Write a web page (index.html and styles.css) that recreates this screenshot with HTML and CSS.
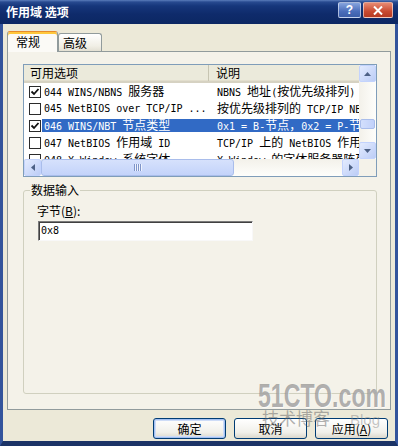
FILE: index.html
```html
<!DOCTYPE html>
<html lang="zh-CN">
<head>
    <meta charset="UTF-8">
    <title>作用域 选项</title>
    <link rel="stylesheet" href="styles.css">
</head>
<body>
<div class="window">
    <div class="titlebar">
        <span class="title">作用域 选项</span>
        <div class="caption-buttons">
            <span class="cap-btn help">?</span>
            <span class="cap-btn close">
                <svg width="10" height="9" viewBox="0 0 10 9"><path d="M1 0.5 L9 8.5 M9 0.5 L1 8.5" stroke="#fff" stroke-width="2"/></svg>
            </span>
        </div>
    </div>

    <div class="client">
        <div class="tabs">
            <div class="tab active">常规</div>
            <div class="tab">高级</div>
        </div>

        <div class="panel">
            <div class="listview">
                <div class="lv-top">
                    <div class="lv-body">
                        <div class="lv-header">
                            <div class="hcol h1">可用选项</div>
                            <div class="hcol h2">说明</div>
                        </div>
                        <div class="lv-row">
                            <span class="check on"></span>
                            <div class="item">
                                <span class="c1">044 WINS/NBNS <span class="h">服务器</span></span>
                                <span class="c2">NBNS <span class="h">地址</span>(<span class="h">按优先级排列</span>)</span>
                            </div>
                        </div>
                        <div class="lv-row">
                            <span class="check"></span>
                            <div class="item">
                                <span class="c1">045 NetBIOS over TCP/IP ...</span>
                                <span class="c2"><span class="h">按优先级排列的</span> TCP/IP NBNS <span class="h">服务器</span></span>
                            </div>
                        </div>
                        <div class="lv-row">
                            <span class="check on"></span>
                            <div class="item selected">
                                <span class="c1">046 WINS/NBT <span class="h">节点类型</span></span>
                                <span class="c2">0x1 = B-<span class="h">节点，</span>0x2 = P-<span class="h">节点</span></span>
                            </div>
                        </div>
                        <div class="lv-row">
                            <span class="check"></span>
                            <div class="item">
                                <span class="c1">047 NetBIOS <span class="h">作用域</span> ID</span>
                                <span class="c2">TCP/IP <span class="h">上的</span> NetBIOS <span class="h">作用域</span></span>
                            </div>
                        </div>
                        <div class="lv-row">
                            <span class="check"></span>
                            <div class="item">
                                <span class="c1">048 X Window <span class="h">系统字体</span></span>
                                <span class="c2">X Window <span class="h">的字体服务器阵列</span></span>
                            </div>
                        </div>
                    </div>
                    <div class="vscroll">
                        <span class="sb-btn">
                            <svg width="7" height="4" viewBox="0 0 7 4"><path d="M0 4 L3.5 0 L7 4Z" fill="#4D6185"/></svg>
                        </span>
                        <span class="v-gap-top"></span>
                        <span class="v-thumb"></span>
                        <span class="v-gap-bottom"></span>
                        <span class="sb-btn">
                            <svg width="7" height="4" viewBox="0 0 7 4"><path d="M0 0 L3.5 4 L7 0Z" fill="#4D6185"/></svg>
                        </span>
                    </div>
                </div>
                <div class="lv-bottom">
                    <div class="hscroll">
                        <span class="sb-btn">
                            <svg width="4" height="7" viewBox="0 0 4 7"><path d="M4 0 L0 3.5 L4 7Z" fill="#4D6185"/></svg>
                        </span>
                        <span class="h-thumb"><span class="grip"></span></span>
                        <span class="h-track"></span>
                        <span class="sb-btn">
                            <svg width="4" height="7" viewBox="0 0 4 7"><path d="M0 0 L4 3.5 L0 7Z" fill="#4D6185"/></svg>
                        </span>
                    </div>
                    <div class="corner"></div>
                </div>
            </div>

            <fieldset class="group">
                <legend>数据输入</legend>
                <label class="field-label">字节(<u>B</u>):</label>
                <div class="input">0x8</div>
            </fieldset>
        </div>

        <div class="buttons">
            <button class="btn default">确定</button>
            <button class="btn">取消</button>
            <button class="btn">应用(<u>A</u>)</button>
        </div>
    </div>

    <div class="watermark">
        <div class="wm-big">51CTO.com</div>
        <div class="wm-small"><span class="wm-cn">技术博客</span><span class="wm-blog">Blog</span></div>
    </div>
</div>
</body>
</html>
```

FILE: styles.css
```css
* {
    box-sizing: border-box;
}
body {
    margin: 0;
    background: #ECE9D8;
    font-family: "Noto Sans CJK SC", sans-serif;
    font-size: 12px;
    color: #000;
}
.window {
    position: relative;
    width: 398px;
    height: 446px;
    display: flex;
    flex-direction: column;
    background: #ECE9D8;
    overflow: hidden;
}

/* title bar */
.titlebar {
    height: 24px;
    flex: none;
    display: flex;
    align-items: center;
    justify-content: space-between;
    padding: 0 5px 0 6px;
    background: linear-gradient(#5b7dbb 0, #284a90 2px, #16367b 6px, #0f2b6b 14px, #0c2763 24px);
}
.title {
    color: #fff;
    font-weight: bold;
    font-size: 12px;
    line-height: 14px;
}
.caption-buttons {
    display: flex;
    gap: 2px;
    margin-top: -4px;
}
.cap-btn {
    height: 16px;
    display: flex;
    align-items: center;
    justify-content: center;
    border: 1px solid rgba(255, 255, 255, 0.55);
    border-radius: 2px;
    color: #fff;
    font-family: "Liberation Sans", sans-serif;
    font-weight: bold;
    font-size: 12px;
}
.cap-btn.help {
    width: 23px;
    background: linear-gradient(#86a4dd, #4a6dbb 60%, #3c5ea9);
}
.cap-btn.close {
    width: 30px;
    background: linear-gradient(#e88a72, #c94a31 60%, #b53a22);
}

/* client area */
.client {
    flex: 1;
    display: flex;
    flex-direction: column;
    border-style: solid;
    border-width: 0 3px 5px;
    border-color: #33549c #33549c #1b3366;
    padding: 7px 4px 0 4px;
}

/* tabs */
.tabs {
    height: 20px;
    flex: none;
    display: flex;
    align-items: flex-end;
    position: relative;
    z-index: 1;
}
.tab {
    width: 44px;
    height: 18px;
    padding: 1px 0 0 4px;
    line-height: 16px;
    border: 1px solid #919B9C;
    border-bottom: none;
    border-radius: 3px 3px 0 0;
    background: linear-gradient(#fff, #F1EFE6 70%, #E3E0D3);
}
.tab.active {
    width: 51px;
    height: 21px;
    margin-bottom: -1px;
    padding: 3px 0 0 8px;
    line-height: 14px;
    border-top: 1px solid #E68B2C;
    box-shadow: inset 0 2px #FFC83C;
    background: #FBFAF6;
}

/* tab page */
.panel {
    height: 359px;
    flex: none;
    border: 1px solid #919B9C;
    background: #F4F2E9;
    padding: 12px 0 0 15px;
    display: flex;
    flex-direction: column;
}

/* list view */
.listview {
    width: 354px;
    height: 113px;
    flex: none;
    border: 1px solid #7F9DB9;
    background: #fff;
    display: flex;
    flex-direction: column;
}
.lv-top {
    height: 94px;
    display: flex;
}
.lv-body {
    flex: 1;
    overflow: hidden;
}
.lv-header {
    height: 18px;
    display: flex;
    background: #EBEADB;
    border-bottom: 2px solid #D6D2C2;
    box-shadow: inset 0 -1px #E2DECD;
}
.hcol {
    line-height: 15px;
    white-space: nowrap;
}
.h1 {
    width: 185px;
    padding-left: 6px;
    border-right: 1px solid #C7C5B2;
}
.h2 {
    flex: 1;
    padding-left: 7px;
}
.lv-row {
    height: 17px;
    display: flex;
    align-items: center;
    white-space: nowrap;
}
.check {
    width: 12px;
    height: 12px;
    flex: none;
    margin: 0 1px 0 5px;
    border: 1px solid #2b2b2b;
    background: #fff;
}
.check.on {
    background: #fff url("data:image/svg+xml,%3Csvg xmlns='http://www.w3.org/2000/svg' width='10' height='10' viewBox='0 0 10 10'%3E%3Cpath d='M1.5 4.5 L4 7 L8.5 2' fill='none' stroke='%23111' stroke-width='1.8'/%3E%3C/svg%3E") no-repeat center;
}
.item {
    flex: 1;
    height: 13px;
    display: flex;
    align-items: center;
    font-family: "DejaVu Sans Mono", "Liberation Mono", monospace;
    font-size: 10px;
    line-height: 13px;
}
.item.selected {
    background: #316AC5;
    color: #fff;
}
.item .c1 {
    width: 167px;
    flex: none;
    padding-left: 2px;
    overflow: hidden;
}
.item .c2 {
    flex: 1;
    padding-left: 8px;
    overflow: hidden;
}
.h {
    font-family: "Noto Sans CJK SC", sans-serif;
    font-size: 12px;
    line-height: 13px;
}

/* scroll bars */
.vscroll {
    width: 17px;
    flex: none;
    display: flex;
    flex-direction: column;
    background: linear-gradient(90deg, #F3F1EA, #FEFEFB);
}
.sb-btn {
    width: 17px;
    height: 17px;
    flex: none;
    display: flex;
    align-items: center;
    justify-content: center;
    border: 1px solid #C3D3FD;
    border-radius: 2px;
    background: linear-gradient(135deg, #E3EBFE, #BCCDF6);
}
.v-gap-top {
    height: 37px;
}
.v-thumb {
    height: 10px;
    margin: 0 1px;
    border: 1px solid #A9BDEB;
    border-radius: 2px;
    background: linear-gradient(90deg, #D3DFFC, #C1D1FA);
}
.v-gap-bottom {
    flex: 1;
}
.lv-bottom {
    height: 17px;
    display: flex;
}
.hscroll {
    width: 335px;
    display: flex;
    background: linear-gradient(#F3F1EA, #FEFEFB);
}
.h-thumb {
    width: 193px;
    display: flex;
    align-items: center;
    justify-content: center;
    border: 1px solid #A9BDEB;
    border-radius: 3px;
    background: linear-gradient(#D6E1FC, #C3D3FA);
}
.grip {
    width: 8px;
    height: 7px;
    background: repeating-linear-gradient(90deg, #7F95C9 0 1px, #EEF3FE 1px 2px);
}
.h-track {
    flex: 1;
}
.corner {
    flex: 1;
    background: #F4F2E9;
}

/* group box */
.group {
    width: 354px;
    height: 211px;
    flex: none;
    margin: 6px 0 0 0;
    padding: 0 0 0 6px;
    border: 1px solid #D0D0BF;
    border-radius: 3px;
}
.group legend {
    padding: 0 1px;
    line-height: 14px;
}
.field-label {
    display: block;
    margin: 7px 0 0 7px;
    line-height: 14px;
}
.input {
    width: 215px;
    height: 20px;
    margin: 3px 0 0 8px;
    padding-left: 2px;
    border: 1px solid;
    border-color: #7A7A7A #F8F8F8 #F8F8F8 #7A7A7A;
    box-shadow: inset 1px 1px #404040;
    background: #fff;
    font-family: "DejaVu Sans Mono", "Liberation Mono", monospace;
    font-size: 10px;
    line-height: 17px;
}

/* dialog buttons */
.buttons {
    display: flex;
    justify-content: flex-end;
    gap: 8px;
    margin-top: 8px;
    padding-right: 3px;
}
.btn {
    width: 73px;
    height: 21px;
    padding: 0;
    border: 1px solid #003C74;
    border-radius: 3px;
    background: linear-gradient(#FFFFFF, #F1F0EA 70%, #DCD8CC);
    font-family: "Noto Sans CJK SC", sans-serif;
    font-size: 12px;
    line-height: 17px;
    color: #000;
}
.btn.default {
    box-shadow: inset 0 0 0 1px #A4C1F2, inset 0 0 0 2px #CEDCF7;
}

/* watermark */
.watermark {
    position: absolute;
    left: 258px;
    top: 378px;
    pointer-events: none;
}
.wm-big {
    font-family: "Liberation Sans", sans-serif;
    font-weight: bold;
    font-size: 34px;
    line-height: 34px;
    color: rgba(125, 125, 125, 0.6);
    text-shadow: 1px 1px rgba(255, 255, 255, 0.7);
    transform: scaleX(0.68);
    transform-origin: left;
    white-space: nowrap;
}
.wm-small {
    display: flex;
    align-items: baseline;
    margin-top: -4px;
    white-space: nowrap;
}
.wm-cn {
    margin-left: 4px;
    font-size: 17px;
    line-height: 20px;
    color: rgba(100, 100, 100, 0.5);
}
.wm-blog {
    margin-left: 20px;
    font-family: "Liberation Sans", sans-serif;
    font-size: 15px;
    color: rgba(130, 130, 130, 0.45);
}
```
